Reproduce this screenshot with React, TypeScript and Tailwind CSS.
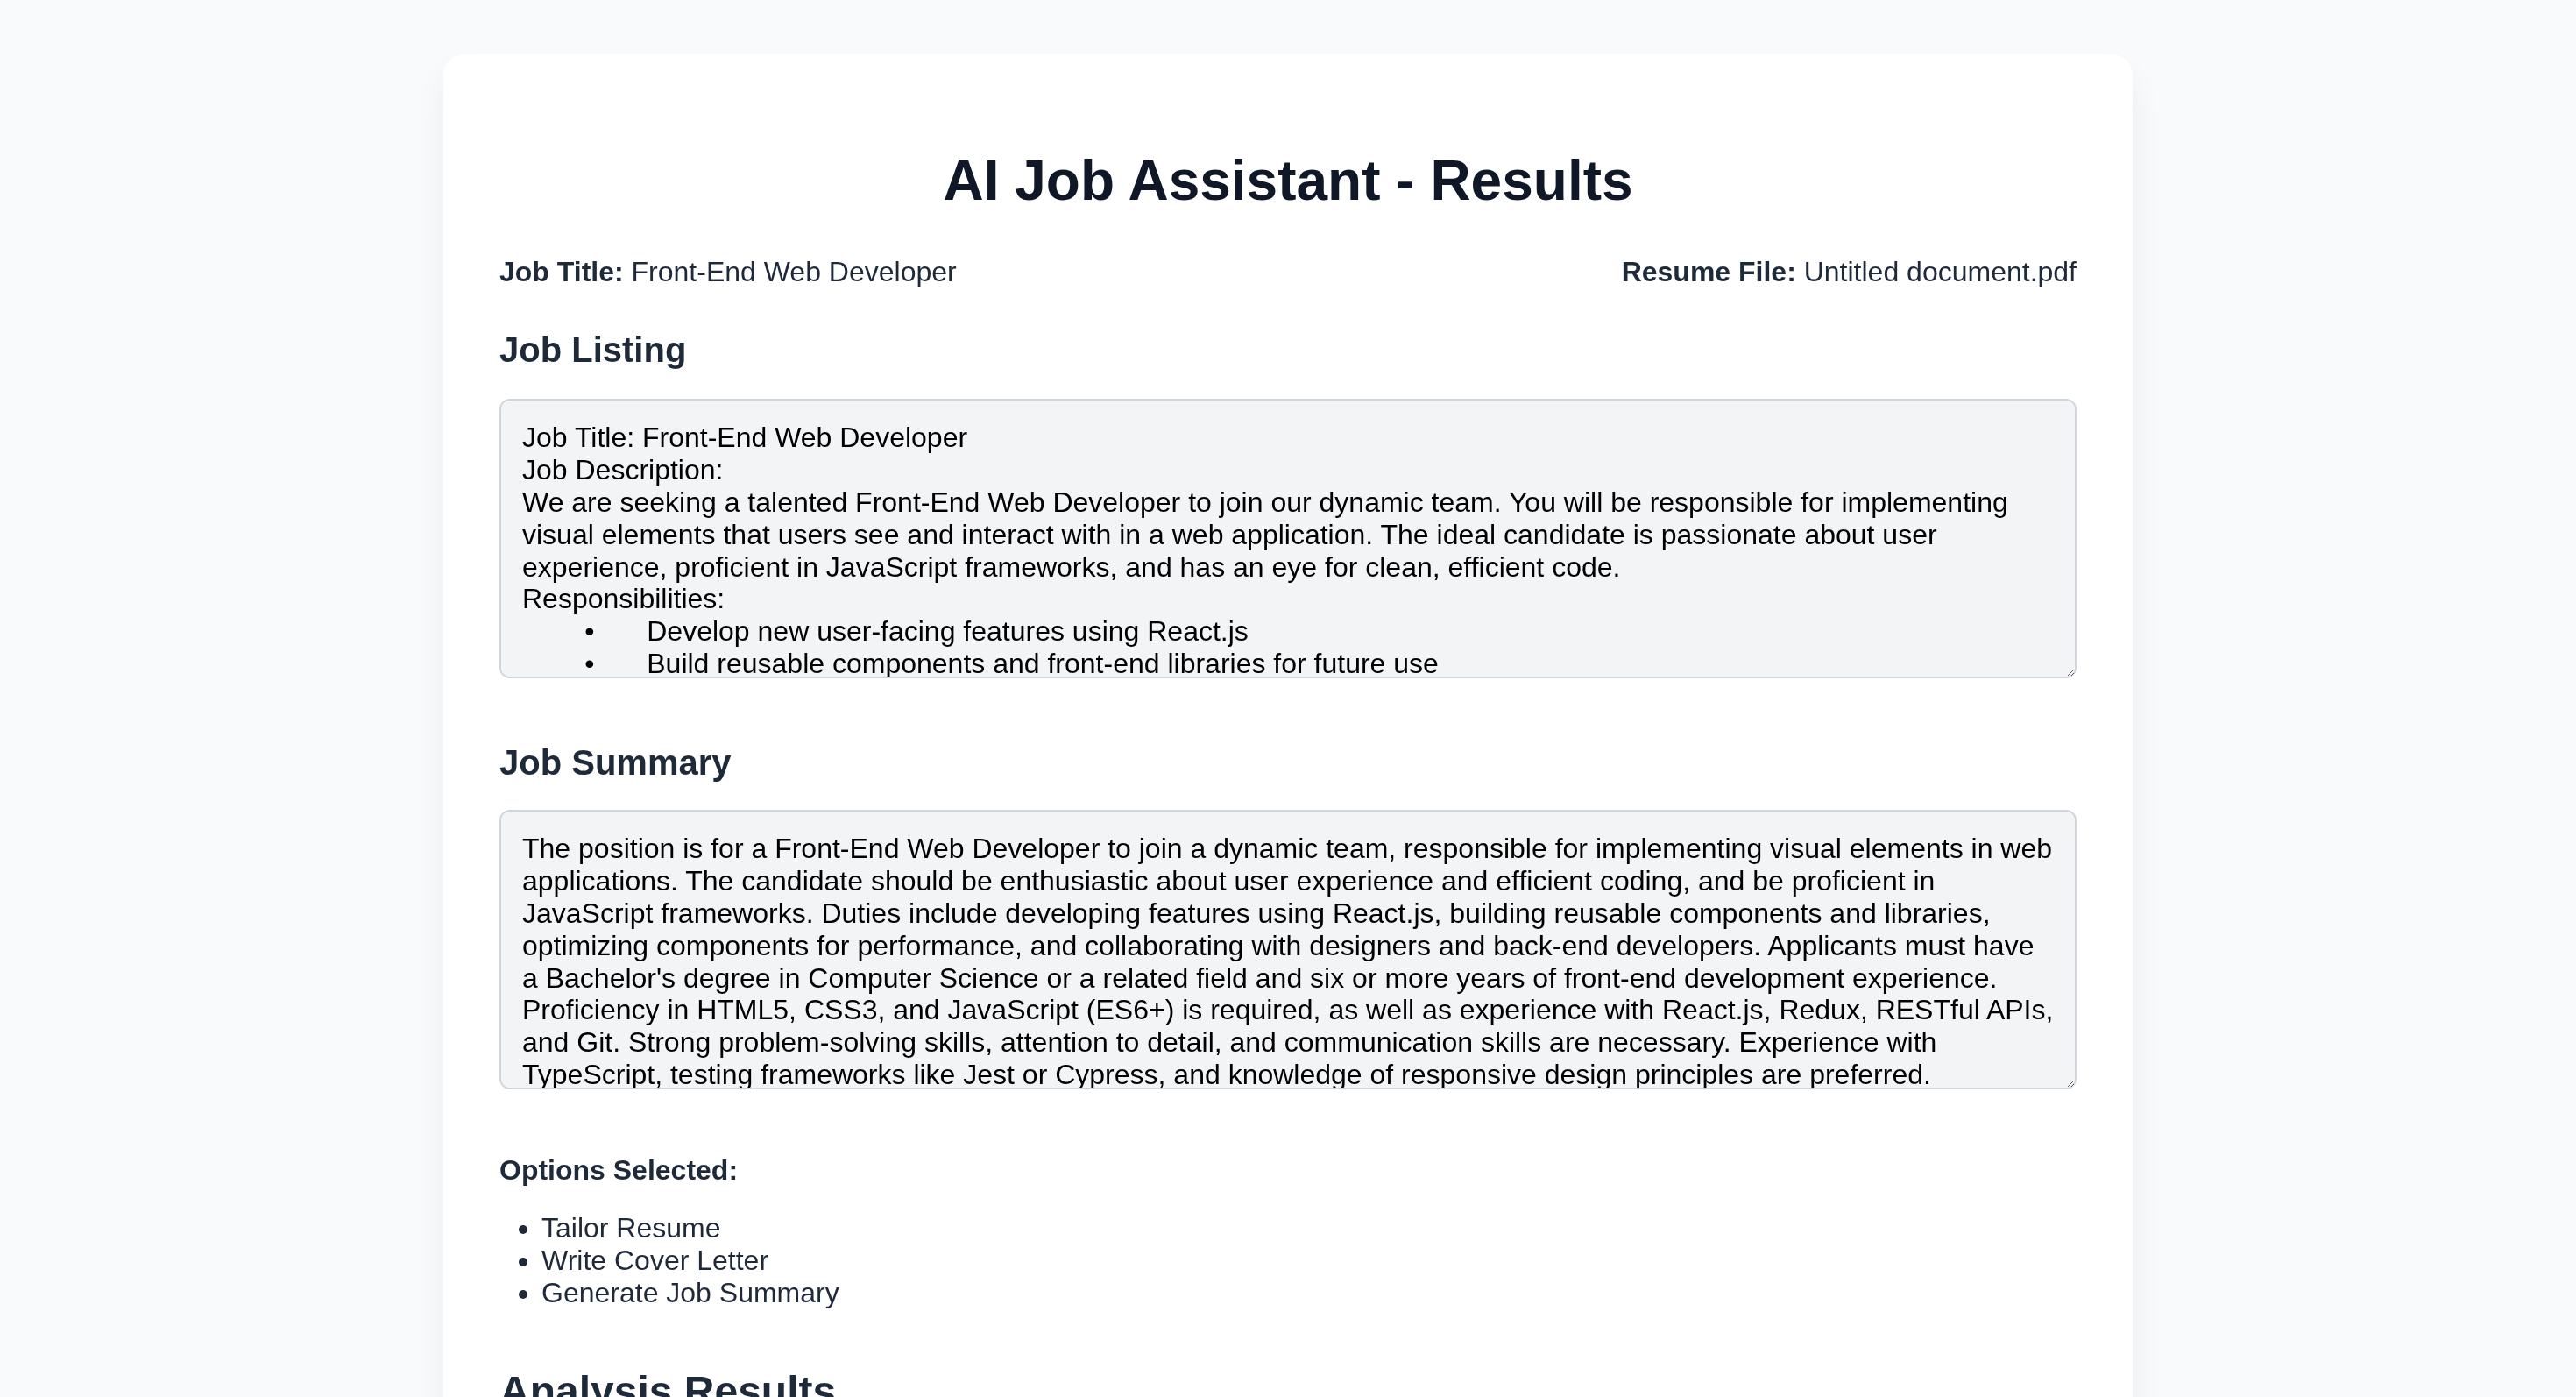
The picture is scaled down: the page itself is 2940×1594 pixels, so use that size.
const jobListing = `Job Title: Front-End Web Developer
Job Description:
We are seeking a talented Front-End Web Developer to join our dynamic team. You will be responsible for implementing visual elements that users see and interact with in a web application. The ideal candidate is passionate about user experience, proficient in JavaScript frameworks, and has an eye for clean, efficient code.
Responsibilities:
\t•\tDevelop new user-facing features using React.js
\t•\tBuild reusable components and front-end libraries for future use
\t•\tTranslate designs and wireframes into high-quality code
\t•\tOptimize components for maximum performance across a vast array of web-capable devices and browsers
\t•\tCollaborate with back-end developers and web designers to improve usability`;

const jobSummary =
  "The position is for a Front-End Web Developer to join a dynamic team, responsible for implementing visual elements in web applications. The candidate should be enthusiastic about user experience and efficient coding, and be proficient in JavaScript frameworks. Duties include developing features using React.js, building reusable components and libraries, optimizing components for performance, and collaborating with designers and back-end developers. Applicants must have a Bachelor's degree in Computer Science or a related field and six or more years of front-end development experience. Proficiency in HTML5, CSS3, and JavaScript (ES6+) is required, as well as experience with React.js, Redux, RESTful APIs, and Git. Strong problem-solving skills, attention to detail, and communication skills are necessary. Experience with TypeScript, testing frameworks like Jest or Cypress, and knowledge of responsive design principles are preferred.";

const options = ["Tailor Resume", "Write Cover Letter", "Generate Job Summary"];

function ResultBox({ value }: { value: string }) {
  return (
    <textarea
      readOnly
      value={value}
      className="block w-full h-[319px] p-[24px] border-2 border-gray-300 rounded-[12px] bg-gray-100 text-black text-[32px] leading-[1.15] [tab-size:8] [scrollbar-width:none] outline-none"
    />
  );
}

function App() {
  return (
    <div className="min-h-screen bg-gray-50 pt-[62px] pb-[64px] font-['Liberation_Sans',Arial,sans-serif] text-gray-800">
      <div className="mx-auto w-[1928px] bg-white rounded-[24px] px-[64px] pt-[64px] pb-[64px] shadow-[0_20px_40px_-6px_rgba(0,0,0,0.08),0_8px_16px_-8px_rgba(0,0,0,0.08)]">
        <h1 className="mt-[44px] text-center text-[64px] leading-[1.15] font-bold text-gray-900">
          AI Job Assistant - Results
        </h1>

        <div className="mt-[48px] flex justify-between text-[32px] leading-[1.15]">
          <p>
            <strong>Job Title:</strong> Front-End Web Developer
          </p>
          <p>
            <strong>Resume File:</strong> Untitled document.pdf
          </p>
        </div>

        <h3 className="mt-[48px] mb-[33px] text-[40px] leading-[1.15] font-bold">Job Listing</h3>
        <ResultBox value={jobListing} />

        <h3 className="mt-[73px] mb-[31px] text-[40px] leading-[1.15] font-bold">Job Summary</h3>
        <ResultBox value={jobSummary} />

        <h4 className="mt-[74px] text-[32px] leading-[1.15] font-bold">Options Selected:</h4>
        <ul className="mt-[29px] pl-[48px] list-disc text-[32px] leading-[1.15]">
          {options.map((option) => (
            <li key={option}>{option}</li>
          ))}
        </ul>

        <h2 className="mt-[66px] text-[48px] leading-[1.15] font-bold">Analysis Results</h2>
      </div>
    </div>
  );
}

export default App;
